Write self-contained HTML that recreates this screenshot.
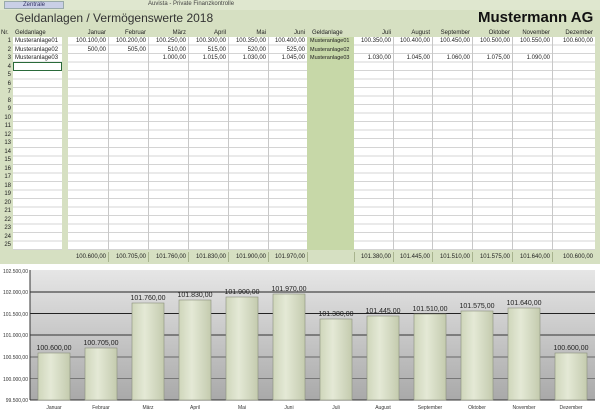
<!DOCTYPE html>
<html><head><meta charset="utf-8"><style>
*{margin:0;padding:0;box-sizing:border-box}
body{width:600px;height:416px;overflow:hidden;background:#d6e0c2;font-family:"Liberation Sans",sans-serif;position:relative;color:#222}
.a{position:absolute;white-space:nowrap}
.c{font-size:6px;line-height:8px}
.r{text-align:right}
.grid{position:absolute;top:37px;height:213px;background-color:#fff;background-image:repeating-linear-gradient(to bottom,transparent 0,transparent 7.52px,#d4d4d4 7.52px,#d4d4d4 8.52px)}
.vl{position:absolute;top:37px;height:213px;width:1px;background:#c8c8c8}
.tl{position:absolute;top:252px;height:10px;width:1px;background:#a8b48e}
</style></head><body>
<div class="a" style="left:0;top:0;width:600px;height:10px;background:#dfe7cf"></div>
<div class="a" style="left:4px;top:1px;width:60px;height:8px;background:#c9cfe6;border:1px solid #9aa;font-size:6px;line-height:6px;text-align:center;color:#336">Zentrale</div>
<div class="a" style="left:148px;top:1px;font-size:6px;color:#444">Auvista - Private Finanzkontrolle</div>
<div class="a" style="left:15px;top:11px;font-size:12px;color:#333">Geldanlagen / Vermögenswerte 2018</div>
<div class="a" style="left:478px;top:9px;font-size:15px;font-weight:bold;color:#111">Mustermann AG</div>

<div class="grid" style="left:13px;width:49px"></div>
<div class="grid" style="left:68px;width:239px"></div>
<div class="a" style="left:307px;top:37px;width:47px;height:213px;background:#c7d8a8"></div>
<div class="grid" style="left:354px;width:241px"></div>
<div class="vl" style="left:108px"></div><div class="vl" style="left:148px"></div><div class="vl" style="left:188px"></div><div class="vl" style="left:228px"></div><div class="vl" style="left:268px"></div>
<div class="vl" style="left:393px"></div><div class="vl" style="left:432px"></div><div class="vl" style="left:472px"></div><div class="vl" style="left:512px"></div><div class="vl" style="left:552px"></div>
<div class="a" style="left:13px;top:62px;width:49px;height:9px;border:1px solid #2a6a3a"></div>

<div class="a c" style="left:1px;top:29px">Nr.</div>
<div class="a c" style="left:15px;top:29px">Geldanlage</div>
<div class="a c" style="left:312px;top:29px">Geldanlage</div>
<div class="a c r" style="left:68px;top:29px;width:38px">Januar</div>
<div class="a c r" style="left:108px;top:29px;width:38px">Februar</div>
<div class="a c r" style="left:148px;top:29px;width:38px">März</div>
<div class="a c r" style="left:188px;top:29px;width:38px">April</div>
<div class="a c r" style="left:228px;top:29px;width:38px">Mai</div>
<div class="a c r" style="left:268px;top:29px;width:37px">Juni</div>
<div class="a c r" style="left:354px;top:29px;width:37px">Juli</div>
<div class="a c r" style="left:393px;top:29px;width:37px">August</div>
<div class="a c r" style="left:432px;top:29px;width:38px">September</div>
<div class="a c r" style="left:472px;top:29px;width:38px">Oktober</div>
<div class="a c r" style="left:512px;top:29px;width:38px">November</div>
<div class="a c r" style="left:552px;top:29px;width:41px">Dezember</div>

<div class="a c r" style="left:0;top:37px;width:11px;line-height:8.52px">1<br>2<br>3<br>4<br>5<br>6<br>7<br>8<br>9<br>10<br>11<br>12<br>13<br>14<br>15<br>16<br>17<br>18<br>19<br>20<br>21<br>22<br>23<br>24<br>25</div>

<div class="a c" style="left:15px;top:37px;line-height:8.52px">Musteranlage01<br>Musteranlage02<br>Musteranlage03</div>
<div class="a c" style="left:310px;top:37px;line-height:8.52px;font-size:5.5px">Musteranlage01<br>Musteranlage02<br>Musteranlage03</div>

<div class="a c r" style="left:68px;top:37px;width:38px;line-height:8.52px">100.100,00<br>500,00</div>
<div class="a c r" style="left:108px;top:37px;width:38px;line-height:8.52px">100.200,00<br>505,00</div>
<div class="a c r" style="left:148px;top:37px;width:38px;line-height:8.52px">100.250,00<br>510,00<br>1.000,00</div>
<div class="a c r" style="left:188px;top:37px;width:38px;line-height:8.52px">100.300,00<br>515,00<br>1.015,00</div>
<div class="a c r" style="left:228px;top:37px;width:38px;line-height:8.52px">100.350,00<br>520,00<br>1.030,00</div>
<div class="a c r" style="left:268px;top:37px;width:37px;line-height:8.52px">100.400,00<br>525,00<br>1.045,00</div>
<div class="a c r" style="left:354px;top:37px;width:37px;line-height:8.52px">100.350,00<br>&nbsp;<br>1.030,00</div>
<div class="a c r" style="left:393px;top:37px;width:37px;line-height:8.52px">100.400,00<br>&nbsp;<br>1.045,00</div>
<div class="a c r" style="left:432px;top:37px;width:38px;line-height:8.52px">100.450,00<br>&nbsp;<br>1.060,00</div>
<div class="a c r" style="left:472px;top:37px;width:38px;line-height:8.52px">100.500,00<br>&nbsp;<br>1.075,00</div>
<div class="a c r" style="left:512px;top:37px;width:38px;line-height:8.52px">100.550,00<br>&nbsp;<br>1.090,00</div>
<div class="a c r" style="left:552px;top:37px;width:41px;line-height:8.52px">100.600,00</div>

<div class="tl" style="left:108px"></div><div class="tl" style="left:148px"></div><div class="tl" style="left:188px"></div><div class="tl" style="left:228px"></div><div class="tl" style="left:268px"></div><div class="tl" style="left:307px"></div><div class="tl" style="left:354px"></div><div class="tl" style="left:393px"></div><div class="tl" style="left:432px"></div><div class="tl" style="left:472px"></div><div class="tl" style="left:512px"></div><div class="tl" style="left:552px"></div>
<div class="a c r" style="left:68px;top:253px;width:38px">100.600,00</div>
<div class="a c r" style="left:108px;top:253px;width:38px">100.705,00</div>
<div class="a c r" style="left:148px;top:253px;width:38px">101.760,00</div>
<div class="a c r" style="left:188px;top:253px;width:38px">101.830,00</div>
<div class="a c r" style="left:228px;top:253px;width:38px">101.900,00</div>
<div class="a c r" style="left:268px;top:253px;width:37px">101.970,00</div>
<div class="a c r" style="left:354px;top:253px;width:37px">101.380,00</div>
<div class="a c r" style="left:393px;top:253px;width:37px">101.445,00</div>
<div class="a c r" style="left:432px;top:253px;width:38px">101.510,00</div>
<div class="a c r" style="left:472px;top:253px;width:38px">101.575,00</div>
<div class="a c r" style="left:512px;top:253px;width:38px">101.640,00</div>
<div class="a c r" style="left:552px;top:253px;width:41px">100.600,00</div>

<svg class="a" style="left:0;top:264px" width="600" height="152" viewBox="0 264 600 152" font-family="Liberation Sans,sans-serif">
<defs>
<linearGradient id="bg" x1="0" y1="0" x2="0" y2="1"><stop offset="0" stop-color="#e6e6e6"/><stop offset="1" stop-color="#a9a9a9"/></linearGradient>
<linearGradient id="bar" x1="0" y1="0" x2="1" y2="0"><stop offset="0" stop-color="#cfd6bb"/><stop offset=".4" stop-color="#e4e9d6"/><stop offset="1" stop-color="#c4cbae"/></linearGradient>
</defs>
<rect x="0" y="264" width="600" height="152" fill="#fff"/>
<rect x="30" y="270" width="565" height="130" fill="url(#bg)"/>
<g stroke-width="1">
<line x1="30" x2="595" y1="292" y2="292" stroke="#222"/>
<line x1="30" x2="595" y1="313.5" y2="313.5" stroke="#222"/>
<line x1="30" x2="595" y1="335" y2="335" stroke="#333"/>
<line x1="30" x2="595" y1="357" y2="357" stroke="#666"/>
<line x1="30" x2="595" y1="378.5" y2="378.5" stroke="#777"/>
<line x1="30" x2="595" y1="400" y2="400" stroke="#333"/>
<line x1="30" x2="30" y1="270" y2="400" stroke="#333"/>
</g>
<g font-size="5" fill="#333" text-anchor="end">
<text x="28" y="273">102.500,00</text><text x="28" y="294">102.000,00</text><text x="28" y="316">101.500,00</text><text x="28" y="337">101.000,00</text><text x="28" y="359">100.500,00</text><text x="28" y="381">100.000,00</text><text x="28" y="402">99.500,00</text>
</g>
<g fill="url(#bar)" stroke="#8a8f7c" stroke-width=".6">
<rect x="38" y="353" width="32" height="47"/><rect x="85" y="348" width="32" height="52"/><rect x="132" y="303" width="32" height="97"/><rect x="179" y="300" width="32" height="100"/><rect x="226" y="297" width="32" height="103"/><rect x="273" y="294" width="32" height="106"/><rect x="320" y="319" width="32" height="81"/><rect x="367" y="316" width="32" height="84"/><rect x="414" y="314" width="32" height="86"/><rect x="461" y="311" width="32" height="89"/><rect x="508" y="308" width="32" height="92"/><rect x="555" y="353" width="32" height="47"/>
</g>
<g font-size="7" fill="#222" text-anchor="middle">
<text x="54" y="350">100.600,00</text><text x="101" y="345">100.705,00</text><text x="148" y="300">101.760,00</text><text x="195" y="297">101.830,00</text><text x="242" y="294">101.900,00</text><text x="289" y="291">101.970,00</text><text x="336" y="316">101.380,00</text><text x="383" y="313">101.445,00</text><text x="430" y="311">101.510,00</text><text x="477" y="308">101.575,00</text><text x="524" y="305">101.640,00</text><text x="571" y="350">100.600,00</text>
</g>
<g font-size="5" fill="#333" text-anchor="middle">
<text x="54" y="409">Januar</text><text x="101" y="409">Februar</text><text x="148" y="409">März</text><text x="195" y="409">April</text><text x="242" y="409">Mai</text><text x="289" y="409">Juni</text><text x="336" y="409">Juli</text><text x="383" y="409">August</text><text x="430" y="409">September</text><text x="477" y="409">Oktober</text><text x="524" y="409">November</text><text x="571" y="409">Dezember</text>
</g>
</svg>
</body></html>
